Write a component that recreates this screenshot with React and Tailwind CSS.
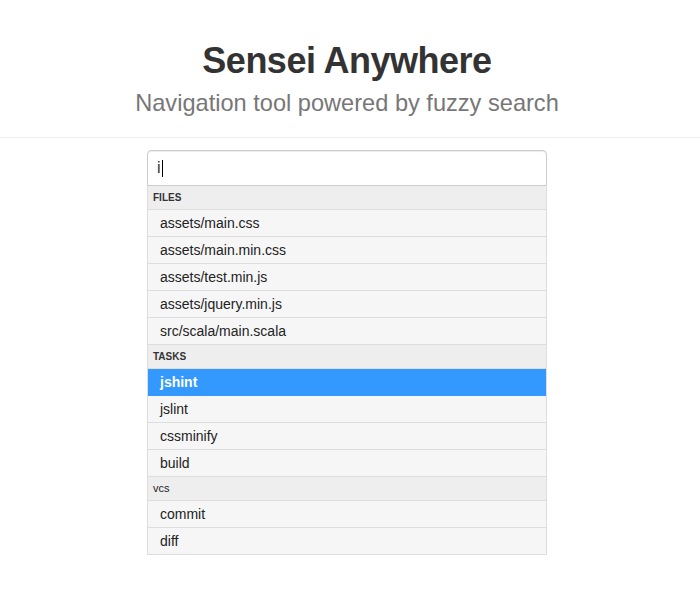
export default function App() {
  const sections = [
    { name: "FILES", bold: true, items: ["assets/main.css", "assets/main.min.css", "assets/test.min.js", "assets/jquery.min.js", "src/scala/main.scala"] },
    { name: "TASKS", bold: true, items: ["jshint", "jslint", "cssminify", "build"] },
    { name: "vcs", bold: false, items: ["commit", "diff"] },
  ];
  return (
    <div className="min-h-[600px] w-full bg-white text-[#333]" style={{ fontFamily: '"Liberation Sans", Arial, sans-serif' }}>
      <div className="border-b border-[#eee] pt-[41px] pb-[19px]">
        <div className="w-[694px] text-center">
          <h1 className="text-[36px] font-bold leading-[40px] tracking-[-0.5px]">Sensei Anywhere</h1>
          <p className="mt-[7px] text-[23.6px] leading-[30px] text-[#777]">Navigation tool powered by fuzzy search</p>
        </div>
      </div>
      <div className="w-[694px]">
        <div className="mx-auto mt-[12px] w-[400px]">
          <div className="flex h-[36px] items-center rounded-t-[4px] border border-[#ccc] bg-white px-[9px] text-[16px] shadow-[inset_0_1px_1px_rgba(0,0,0,0.075)]">
            <span>i</span>
            <span className="ml-[1px] inline-block h-[17px] w-[1px] bg-black" />
          </div>
          <div className="border-x border-[#ddd]">
            {sections.map((s) => (
              <div key={s.name}>
                <div
                  className={
                    s.bold
                      ? "flex h-[24px] items-center border-b border-[#ddd] bg-[#eee] px-[5px] text-[10px] font-bold text-[#333]"
                      : "flex h-[24px] items-center border-b border-[#ddd] bg-[#eee] px-[5px] text-[11px] text-[#222]"
                  }
                >
                  {s.name}
                </div>
                {s.items.map((it) => {
                  const active = it === "jshint";
                  return (
                    <div
                      key={it}
                      className={
                        active
                          ? "flex h-[27px] items-center border-b border-[#3399ff] bg-[#3399ff] px-[12px] text-[14px] font-bold text-white"
                          : "flex h-[27px] items-center border-b border-[#ddd] bg-[#f6f6f6] px-[12px] text-[14px] text-[#222]"
                      }
                    >
                      {it}
                    </div>
                  );
                })}
              </div>
            ))}
          </div>
        </div>
      </div>
    </div>
  );
}
